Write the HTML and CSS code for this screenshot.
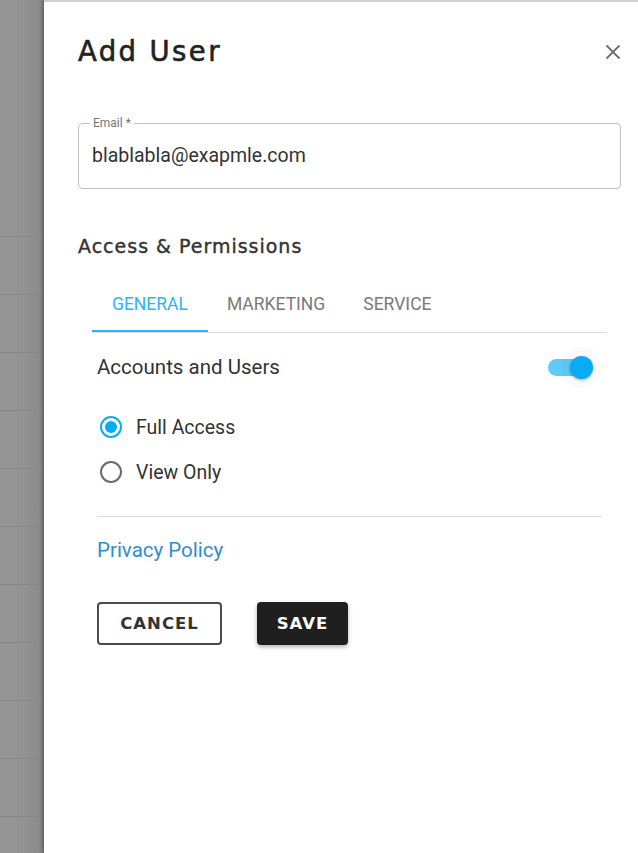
FILE: index.html
```html
<!DOCTYPE html>
<html>
<head>
<meta charset="utf-8">
<link rel="stylesheet" href="styles.css">
</head>
<body>
<div class="screen">
  <div class="backdrop">
    <div class="bd-head"></div>
    <div class="bd-row"></div><div class="bd-row"></div><div class="bd-row"></div>
    <div class="bd-row"></div><div class="bd-row"></div><div class="bd-row"></div>
    <div class="bd-row"></div><div class="bd-row"></div><div class="bd-row"></div>
    <div class="bd-row"></div><div class="bd-row"></div><div class="bd-row"></div>
  </div>
  <div class="panel">
    <div class="header">
      <h1 class="title">Add User</h1>
      <button class="close" aria-label="Close">
        <svg width="16" height="16" viewBox="0 0 16 16"><path d="M1.5 1.5 L14.5 14.5 M14.5 1.5 L1.5 14.5" stroke="#6f6f6f" stroke-width="1.8" fill="none"/></svg>
      </button>
    </div>
    <fieldset class="field">
      <legend class="field-label">Email *</legend>
      <div class="field-value">blablabla@exapmle.com</div>
    </fieldset>
    <h2 class="section-title">Access &amp; Permissions</h2>
    <div class="perm">
      <div class="tabs">
        <div class="tab active">GENERAL</div>
        <div class="tab">MARKETING</div>
        <div class="tab">SERVICE</div>
      </div>
      <div class="perm-body">
        <div class="row-toggle">
          <span class="row-label">Accounts and Users</span>
          <span class="switch"><span class="track"></span><span class="thumb"></span></span>
        </div>
        <div class="radios">
          <label class="radio"><span class="dot checked"></span><span>Full Access</span></label>
          <label class="radio"><span class="dot"></span><span>View Only</span></label>
        </div>
        <div class="divider"></div>
        <a class="link">Privacy Policy</a>
        <div class="actions">
          <button class="btn btn-outline">CANCEL</button>
          <button class="btn btn-dark">SAVE</button>
        </div>
      </div>
    </div>
  </div>
</div>
</body>
</html>
```
FILE: styles.css
```css
html, body {
  margin: 0;
  padding: 0;
  width: 638px;
  height: 853px;
  overflow: hidden;
  background: #ffffff;
}
.screen {
  display: flex;
  height: 853px;
}
.backdrop {
  width: 44px;
  flex: none;
  display: flex;
  flex-direction: column;
  background: linear-gradient(to right, #959595 0, #959595 17px, #929292 17px, #929292 28px, #8f8f8f 28px, #8c8c8c 40px, #838383 44px);
}
.bd-head {
  height: 179px;
  flex: none;
}
.bd-row {
  height: 57px;
  flex: none;
  border-bottom: 1px solid #868686;
}
.panel {
  flex: 1;
  border-top: 2px solid #cfcfcf;
  box-shadow: -2px 0 3px rgba(0,0,0,0.25);
  padding: 0 17px 0 34px;
  font-family: Roboto, "Liberation Sans", sans-serif;
  color: #2b2b2b;
}
.header {
  display: flex;
  align-items: center;
  justify-content: space-between;
  height: 98px;
  margin-top: -2px;
}
.title {
  margin: 0;
  padding-top: 4px;
  font-family: "DejaVu Sans", sans-serif;
  font-weight: 400;
  font-size: 27.5px;
  letter-spacing: 2.4px;
  -webkit-text-stroke: 0.6px #222;
  color: #222;
}
.close {
  border: 0;
  background: none;
  padding: 0;
  width: 16px;
  height: 16px;
  display: flex;
  margin-top: 6px;
}
.field {
  margin: 18px 0 0 0;
  padding: 0 13px;
  border: 1px solid #c4c4c4;
  border-radius: 4px;
  height: 73px;
  box-sizing: border-box;
}
.field-label {
  font-size: 12px;
  color: #757575;
  padding: 0 3px;
  margin-left: -2px;
  line-height: 14px;
}
.field-value {
  font-size: 19.5px;
  color: #333;
  margin-top: 15px;
  line-height: 22px;
}
.section-title {
  margin: 46px 0 0 0;
  font-family: "DejaVu Sans", sans-serif;
  font-weight: 400;
  font-size: 19px;
  letter-spacing: 1px;
  -webkit-text-stroke: 0.4px #333;
  color: #333;
  line-height: 22px;
}
.perm {
  margin: 0 14px;
}
.tabs {
  display: flex;
  margin-top: 28px;
  border-bottom: 1px solid #dcdcdc;
}
.tab {
  padding: 0 20px;
  height: 47px;
  line-height: 39px;
  font-size: 17.5px;
  color: #7a7a7a;
  box-sizing: border-box;
}
.tab.active {
  color: #29b6f6;
  border-bottom: 2px solid #29b6f6;
  margin-bottom: -1px;
}
.tab + .tab { padding: 0 19px; }
.perm-body {
  padding: 0 5px;
}
.row-toggle {
  display: flex;
  align-items: center;
  justify-content: space-between;
  height: 68px;
}
.row-label {
  font-size: 20.5px;
  color: #333;
}
.switch {
  position: relative;
  width: 48px;
  height: 24px;
  display: block;
  margin-right: 8px;
}
.track {
  position: absolute;
  left: 2px;
  top: 4px;
  width: 38px;
  height: 17px;
  border-radius: 9px;
  background: #5fcbf8;
}
.thumb {
  position: absolute;
  left: 24px;
  top: 1px;
  width: 23px;
  height: 23px;
  border-radius: 50%;
  background: #0aabf5;
  box-shadow: 0 1px 3px rgba(0,0,0,0.3), 0 0 0 9px rgba(0,0,0,0.02);
}
.radios {
  display: flex;
  flex-direction: column;
  gap: 21px;
  margin-top: 14px;
  margin-left: 3px;
}
.radio {
  display: flex;
  align-items: center;
  gap: 14px;
  font-size: 19.5px;
  color: #333;
  height: 24px;
}
.dot {
  width: 22px;
  height: 22px;
  border-radius: 50%;
  border: 2px solid #6b6b6b;
  box-sizing: border-box;
  position: relative;
  flex: none;
}
.dot.checked {
  border-color: #0aabf5;
}
.dot.checked::after {
  content: "";
  position: absolute;
  left: 3px;
  top: 3px;
  width: 12px;
  height: 12px;
  border-radius: 50%;
  background: #0aabf5;
}
.divider {
  height: 1px;
  background: #dcdcdc;
  margin-top: 32px;
}
.link {
  display: block;
  margin-top: 22px;
  font-size: 20.5px;
  color: #2e8ece;
  line-height: 22px;
}
.actions {
  display: flex;
  gap: 35px;
  margin-top: 41px;
}
.btn {
  height: 43px;
  border-radius: 4px;
  font-family: "DejaVu Sans", sans-serif;
  font-weight: 700;
  font-size: 16.5px;
  letter-spacing: 1px;
  box-sizing: border-box;
  cursor: pointer;
  padding: 0;
}
.btn-outline {
  width: 125px;
  background: #fff;
  border: 2px solid #4a4a4a;
  color: #333;
}
.btn-dark {
  width: 91px;
  background: #1f1f1f;
  border: 0;
  color: #fff;
  box-shadow: 0 2px 4px rgba(0,0,0,0.3);
}
```
